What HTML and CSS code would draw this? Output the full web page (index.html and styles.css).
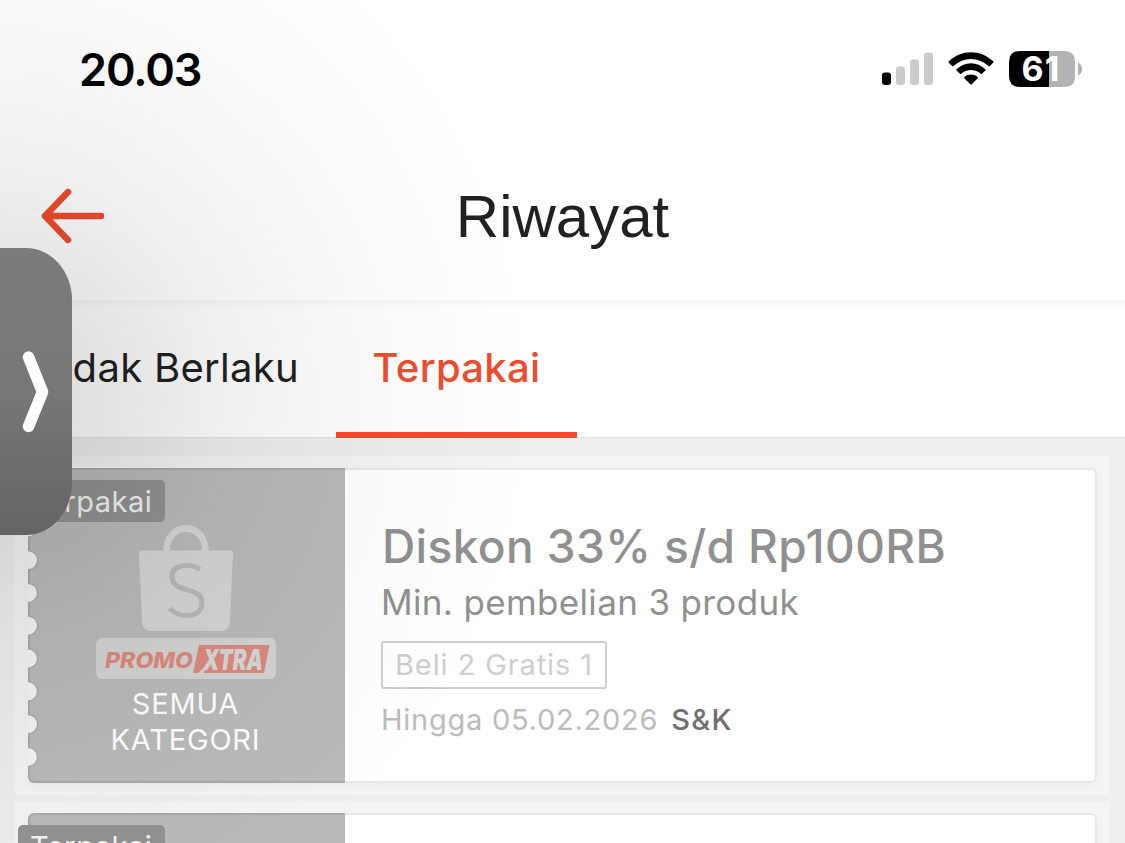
FILE: index.html
```html
<!DOCTYPE html>
<html lang="id">
<head>
<meta charset="utf-8">
<title>Riwayat</title>
<link rel="stylesheet" href="styles.css">
</head>
<body>

<div class="statusbar">
    <span class="time">20.03</span>
    <div class="status-icons">
        <svg class="signal" width="52" height="34" viewBox="0 0 52 34">
            <rect x="0" y="20.5" width="9" height="12.5" rx="3" fill="#000"/>
            <rect x="14" y="14.5" width="9" height="18.5" rx="3" fill="#cbcbcb"/>
            <rect x="28" y="7.5" width="9" height="25.5" rx="3" fill="#cbcbcb"/>
            <rect x="42" y="0.5" width="9" height="32.5" rx="3" fill="#cbcbcb"/>
        </svg>
        <svg class="wifi" width="46" height="34" viewBox="0 0 46 34">
            <path d="M.8 9.3C13.500-2.900 32.500-2.900 45.200 9.300Q45.800 10 45.200 10.700L41.800 14Q41.200 14.600 40.500 14C30 4.500 16 4.500 5.500 14Q4.800 14.600 4.200 14L.8 10.700Q.2 10 .8 9.300Z"/>
            <path d="M8.600 17.200C16.500 9.200 29.500 9.200 37.400 17.200Q38 17.900 37.400 18.500L34 21.800Q33.400 22.400 32.700 21.800C27.500 16.800 18.500 16.800 13.300 21.800Q12.600 22.400 12 21.800L8.600 18.500Q8 17.900 8.600 17.200Z"/>
            <path d="M16.500 25C20 21.800 26 21.800 29.500 25Q30.200 25.700 29.500 26.400L23.700 32.200Q23 32.900 22.300 32.200L16.500 26.400Q15.800 25.700 16.500 25Z"/>
        </svg>
        <svg class="battery" width="74" height="36" viewBox="0 0 74 36">
            <path d="M11 0H40V36H11Q0 36 0 25V11Q0 0 11 0Z" fill="#000"/>
            <path d="M40 0H55Q66 0 66 11V25Q66 36 55 36H40Z" fill="#b3b3b3"/>
            <path d="M69 11.500Q73 13.500 73 18T69 24.500Z" fill="#b3b3b3"/>
            <text x="12.500" y="30" class="battery-text" textLength="38">61</text>
        </svg>
    </div>
</div>

<div class="navbar">
    <svg class="back" width="64" height="56" viewBox="0 0 64 56">
        <path d="M27 4L4 28L27 52M4 28H60"/>
    </svg>
    <h1 class="title">Riwayat</h1>
</div>

<div class="tabs">
    <div class="tab tab-left">Tidak Berlaku</div>
    <div class="tab active">Terpakai</div>
</div>

<div class="list">
    <div class="voucher">
        <div class="card">
            <span class="badge">Terpakai</span>
            <div class="left">
                <svg class="notches" width="14" height="315" viewBox="0 0 14 315">
                    <circle cx="0" cy="26.500" r="9.700"/>
                    <circle cx="0" cy="59.300" r="9.700"/>
                    <circle cx="0" cy="92.100" r="9.700"/>
                    <circle cx="0" cy="124.900" r="9.700"/>
                    <circle cx="0" cy="157.700" r="9.700"/>
                    <circle cx="0" cy="190.500" r="9.700"/>
                    <circle cx="0" cy="223.300" r="9.700"/>
                    <circle cx="0" cy="256.100" r="9.700"/>
                    <circle cx="0" cy="288.900" r="9.700"/>
                </svg>
                <svg class="bag" width="94" height="106" viewBox="0 0 94 106">
                    <path d="M27.500 27C27.500 12 36 3.500 47 3.500S66.500 12 66.500 27" fill="none" stroke="#d5d5d5" stroke-width="6.800"/>
                    <path d="M1.500 25.500H92.500Q94 25.500 94 27L91 97Q90.300 106 82 106H12Q3.700 106 3 97L0 27Q0 25.500 1.500 25.500Z" fill="#d5d5d5"/>
                    <path d="M61 44.500C51 38 33 38.500 33 52C33 69 63 60 63 78C63 93 42 94 30.500 83.500" fill="none" stroke="#b9b9b9" stroke-width="5"/>
                </svg>
                <svg class="promo" width="180" height="41" viewBox="0 0 180 41">
                    <rect width="180" height="41" rx="6" fill="#d3d3d3"/>
                    <text x="9" y="29.500" class="promo-text" textLength="88" lengthAdjust="spacingAndGlyphs">PROMO</text>
                    <path d="M103 7H173.500L168 35H107.500L112 26L102 35H97Z" fill="#dc8a7c"/>
                    <text x="107" y="32" class="xtra-text" textLength="60" lengthAdjust="spacingAndGlyphs">XTRA</text>
                </svg>
                <div class="category">SEMUA<br>KATEGORI</div>
            </div>
            <div class="info">
                <div class="name">Diskon 33% s/d Rp100RB</div>
                <div class="minimum">Min. pembelian 3 produk</div>
                <div class="tag">Beli 2 Gratis 1</div>
                <div class="expiry"><span class="date">Hingga 05.02.2026</span><span class="terms">S&amp;K</span></div>
            </div>
        </div>
    </div>

    <div class="voucher">
        <div class="card">
            <span class="badge">Terpakai</span>
            <div class="left"></div>
            <div class="info"></div>
        </div>
    </div>
</div>

<div class="shade"></div>
<div class="handle">
    <svg width="28" height="82" viewBox="0 0 28 82">
        <path d="M6.500 6L20.500 41L6.500 75.500"/>
    </svg>
</div>

</body>
</html>
```
FILE: styles.css
```css
* {
    box-sizing: border-box;
}

body {
    margin: 0;
    height: 843px;
    overflow: hidden;
    position: relative;
    background: #eee;
    font-family: Inter, "Liberation Sans", sans-serif;
}

svg {
    display: block;
}

.statusbar {
    height: 140px;
    padding: 0 42px 2px 79px;
    display: flex;
    justify-content: space-between;
    align-items: center;
    background: #fff;
}

.time {
    font-size: 45px;
    font-weight: 600;
    letter-spacing: -1.1px;
    color: #000;
}

.status-icons {
    display: flex;
    align-items: center;
}

.wifi {
    margin-left: 14px;
    margin-right: 15px;
}

.battery-text {
    font-size: 34px;
    font-weight: 700;
    fill: #fff;
}

.navbar {
    height: 160px;
    padding: 0 41px 8px;
    display: grid;
    grid-template-columns: 64px 1fr 64px;
    align-items: center;
    background: #fff;
}

.back path {
    fill: none;
    stroke: #ee4d2d;
    stroke-width: 6.5;
    stroke-linecap: round;
    stroke-linejoin: round;
}

.title {
    margin: 0;
    padding-top: 2px;
    text-align: center;
    font-family: "Liberation Sans", sans-serif;
    font-size: 60px;
    font-weight: 400;
    line-height: 68px;
    color: #212121;
}

.tabs {
    height: 138px;
    display: flex;
    background: linear-gradient(#f7f7f7, #fff 10px);
    border-bottom: 1px solid #e2e2e2;
}

.tab {
    height: 138px;
    line-height: 136px;
    font-size: 40px;
    letter-spacing: 0.3px;
    white-space: nowrap;
    color: #212121;
}

.tab-left {
    width: 336px;
    padding-right: 37px;
    display: flex;
    justify-content: flex-end;
}

.tab.active {
    width: 241px;
    text-align: center;
    font-weight: 500;
    color: #ee4d2d;
    border-bottom: 6px solid #ee4d2d;
}

.list {
    padding: 18px 15px 0;
    display: flex;
    flex-direction: column;
    gap: 6px;
}

.voucher {
    padding: 12px 13px;
    background: #f4f4f4;
}

.card {
    height: 315px;
    display: flex;
    position: relative;
    border-radius: 6px;
    background: #fff;
    box-shadow: 0 4px 8px rgba(0, 0, 0, 0.03);
}

.badge {
    position: absolute;
    left: -10px;
    top: 12px;
    width: 147px;
    height: 42px;
    padding-left: 12px;
    border-radius: 5px;
    background: #929292;
    color: #f4f4f4;
    font-size: 29px;
    letter-spacing: 0.5px;
    line-height: 43px;
}

.left {
    width: 317px;
    padding: 57px 4px 0 0;
    display: flex;
    flex-direction: column;
    align-items: center;
    background: #bababa;
    border: 2px solid #a9a9a9;
    border-right: 0;
    border-radius: 6px 0 0 6px;
}

.notches {
    position: absolute;
    left: 0;
    top: 0;
}

.notches circle {
    fill: #f4f4f4;
    stroke: #adadad;
    stroke-width: 1.5;
}

.bag {
    margin-top: -2px;
}

.promo {
    margin-top: 7px;
}

.promo-text,
.xtra-text {
    font-style: italic;
    font-weight: 800;
}

.promo-text {
    font-size: 21px;
    fill: #dc8a7c;
}

.xtra-text {
    font-size: 29px;
    font-weight: 900;
    fill: #d6d6d6;
}

.category {
    margin-top: 7px;
    text-align: center;
    font-size: 29px;
    line-height: 36px;
    letter-spacing: 0.8px;
    color: #fff;
}

.info {
    flex: 1;
    padding: 46px 0 0 36px;
    border: 2px solid #e8e8e8;
    border-left: 0;
    border-radius: 0 6px 6px 0;
    white-space: nowrap;
    color: #909090;
}

.name {
    padding-left: 1px;
    font-size: 46px;
    font-weight: 500;
    line-height: 60px;
    letter-spacing: 0.4px;
}

.minimum {
    padding-top: 1px;
    font-size: 35px;
    line-height: 50px;
    letter-spacing: 0.35px;
}

.tag {
    width: 226px;
    height: 48px;
    margin-top: 14px;
    border: 2px solid #cfcfcf;
    border-radius: 3px;
    line-height: 44px;
    font-size: 29px;
    letter-spacing: 0.9px;
    text-align: center;
    color: #cfcfcf;
}

.expiry {
    margin-top: 11px;
    display: flex;
    gap: 13px;
    font-size: 29px;
    line-height: 40px;
}

.date {
    letter-spacing: 0.75px;
    color: #bcbcbc;
}

.terms {
    font-weight: 500;
    letter-spacing: 1.3px;
    color: #707070;
}

/* soft shadow spreading from the drawer handle */
.shade {
    position: absolute;
    inset: 0;
    background: radial-gradient(540px 560px at 0 400px, rgba(0, 0, 0, 0.15), rgba(0, 0, 0, 0.115) 18%, rgba(0, 0, 0, 0.06) 42%, rgba(0, 0, 0, 0.018) 72%, transparent);
}

.handle {
    position: absolute;
    left: 0;
    top: 248px;
    width: 72px;
    height: 287px;
    padding-left: 22px;
    display: flex;
    align-items: center;
    border-radius: 0 46px 46px 0 / 0 52px 52px 0;
    background: linear-gradient(#7b7b7b, #777 50%, #646464);
}

.handle path {
    fill: none;
    stroke: #fff;
    stroke-width: 11.5;
    stroke-linecap: round;
    stroke-linejoin: round;
}
```
